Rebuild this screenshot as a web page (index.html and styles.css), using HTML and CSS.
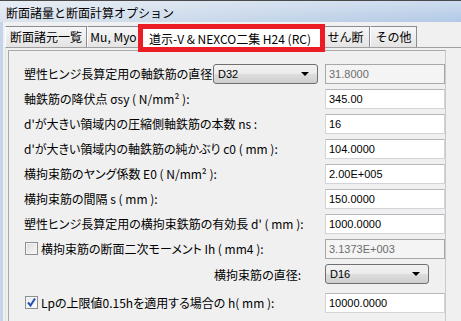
FILE: index.html
```html
<!DOCTYPE html>
<html>
<head>
    <title>断面諸量と断面計算オプション</title>
    <link rel="stylesheet" href="styles.css">
</head>
<body>
    <div class="window">
        <div class="titlebar">断面諸量と断面計算オプション</div>
        <div class="frame">
            <div class="tabs">
                <div class="tab tab-1">断面諸元一覧</div>
                <div class="tab tab-2">Mu, Myo</div>
                <div class="tab active">道示-V &amp; NEXCO二集 H24 (RC)</div>
                <div class="tab tab-3">せん断</div>
                <div class="tab tab-4">その他</div>
            </div>
            <div class="page">
                <div class="panel">
                    <div class="row">
                        <div class="label split">
                            <span>塑性ヒンジ長算定用の軸鉄筋の直径</span>
                            <div class="combo small">D32<span class="arrow"></span></div>
                        </div>
                        <div class="field disabled">31.8000</div>
                    </div>
                    <div class="row">
                        <div class="label">軸鉄筋の降伏点 σsy ( N/mm² ):</div>
                        <div class="field">345.00</div>
                    </div>
                    <div class="row">
                        <div class="label">d'が大きい領域内の圧縮側軸鉄筋の本数 ns :</div>
                        <div class="field">16</div>
                    </div>
                    <div class="row">
                        <div class="label">d'が大きい領域内の軸鉄筋の純かぶり c0 ( mm ):</div>
                        <div class="field">104.0000</div>
                    </div>
                    <div class="row">
                        <div class="label">横拘束筋のヤング係数 E0 ( N/mm² ):</div>
                        <div class="field">2.00E+005</div>
                    </div>
                    <div class="row">
                        <div class="label">横拘束筋の間隔 s ( mm ):</div>
                        <div class="field">150.0000</div>
                    </div>
                    <div class="row">
                        <div class="label">塑性ヒンジ長算定用の横拘束鉄筋の有効長 d' ( mm ):</div>
                        <div class="field">1000.0000</div>
                    </div>
                    <div class="row">
                        <div class="label check">
                            <span class="box"></span>
                            <span>横拘束筋の断面二次モーメント Ih ( mm4 ):</span>
                        </div>
                        <div class="field disabled">3.1373E+003</div>
                    </div>
                    <div class="row row-9">
                        <div class="label right">横拘束筋の直径:</div>
                        <div class="combo">D16<span class="arrow"></span></div>
                    </div>
                    <div class="row row-10">
                        <div class="label check">
                            <span class="box checked">
                                <svg width="11" height="11" viewBox="0 0 11 11">
                                    <path d="M2 5.5 L4.5 8.5 L9 1.5" fill="none" stroke="#2a4fa8" stroke-width="2"/>
                                </svg>
                            </span>
                            <span>Lpの上限値0.15hを適用する場合の h( mm ):</span>
                        </div>
                        <div class="field">10000.0000</div>
                    </div>
                </div>
            </div>
        </div>
    </div>
</body>
</html>
```

FILE: styles.css
```css
body {
    margin: 0;
    background-color: #f0f0f0;
    font-family: "Noto Sans CJK JP", "Liberation Sans", sans-serif;
    font-size: 12px;
    font-feature-settings: "palt";
    color: #000;
}
.window {
    width: 461px;
    height: 321px;
    overflow: hidden;
}
.titlebar {
    height: 21px;
    border-top: 1px solid #4a4a4a;
    padding-left: 6px;
    line-height: 23px;
    font-feature-settings: normal;
    background: linear-gradient(to bottom, rgba(255, 255, 255, 0.35), rgba(255, 255, 255, 0)),
                linear-gradient(to right, #dce4ee, #c9d8ea 45%, #b2c9e6);
}
.frame {
    border-left: 3px solid #c4d5ea;
    padding-top: 2px;
    height: 300px;
}

/* tabs */
.tabs {
    display: flex;
    align-items: flex-end;
    height: 23px;
    padding-left: 2px;
}
.tab {
    position: relative;
    box-sizing: border-box;
    height: 21px;
    border: 1px solid #898c95;
    border-bottom: none;
    border-left-color: #fff;
    background: linear-gradient(to bottom, #f6f6f6, #e4e4e4);
    text-align: center;
    line-height: 20px;
    white-space: nowrap;
    font-feature-settings: normal;
}
.tab-1 { width: 82px; }
.tab-2 { width: 53px; }
.tab-3 { width: 49px; }
.tab-4 { width: 47px; }
.tab.active {
    width: 181px;
    height: 24px;
    margin-bottom: -1px;
    z-index: 1;
    background: #fff;
    border-left-color: #898c95;
    text-align: left;
    padding-left: 8px;
    line-height: 28px;
}
.tab.active::after {
    content: "";
    position: absolute;
    left: -3px;
    top: -1px;
    width: 177px;
    height: 18px;
    border: 5px solid #ec1c24;
}

/* page */
.page {
    margin-left: 2px;
    border-top: 1px solid #a0a0a0;
    border-left: 1px solid #e3e3e3;
    padding: 2px 0 0 2px;
}
.panel {
    box-sizing: border-box;
    width: 438px;
    height: 280px;
    border: 1px solid #c9c9c9;
    border-top-color: #a9a9a9;
    border-left-color: #a9a9a9;
    padding: 10px 0 0 15px;
}
.row {
    display: grid;
    grid-template-columns: 1fr 120px;
    column-gap: 7px;
    align-items: center;
    height: 25px;
}
.row-9 { height: 26px; }
.row-10 { height: 31px; }
.label {
    white-space: nowrap;
}
.label.split {
    display: flex;
    align-items: center;
    justify-content: space-between;
}
.label.right {
    text-align: right;
    padding-right: 17px;
}
.label.check {
    display: flex;
    align-items: center;
    gap: 3px;
    padding-left: 1px;
}

/* controls */
.field {
    box-sizing: border-box;
    height: 20px;
    border: 1px solid #d2d4da;
    border-top-color: #b5b7bd;
    background: #fff;
    padding-left: 3px;
    font-family: "Liberation Sans", sans-serif;
    font-size: 11px;
    line-height: 18px;
}
.field.disabled {
    border-color: #a8a8a8;
    background: #f4f4f4;
    color: #6d6d6d;
}
.combo {
    position: relative;
    box-sizing: border-box;
    width: 104px;
    height: 20px;
    border: 1px solid #707070;
    border-radius: 3px;
    background: linear-gradient(to bottom, #f2f2f2, #ebebeb 50%, #dddddd 51%, #cfcfcf);
    padding-left: 4px;
    font-family: "Liberation Sans", sans-serif;
    font-size: 11px;
    line-height: 18px;
}
.combo.small {
    width: 105px;
}
.arrow {
    position: absolute;
    right: 8px;
    top: 7px;
    border-left: 4px solid transparent;
    border-right: 4px solid transparent;
    border-top: 4px solid #000;
}
.box {
    box-sizing: border-box;
    display: inline-block;
    width: 13px;
    height: 13px;
    border: 1px solid #8e8f8f;
    background: linear-gradient(135deg, #dcdcdc, #f8f8f8);
    box-shadow: inset 0 0 0 1px #f4f4f4;
}
.box.checked {
    background: linear-gradient(135deg, #e6ecf5, #ffffff);
}
.box svg {
    display: block;
}
```
